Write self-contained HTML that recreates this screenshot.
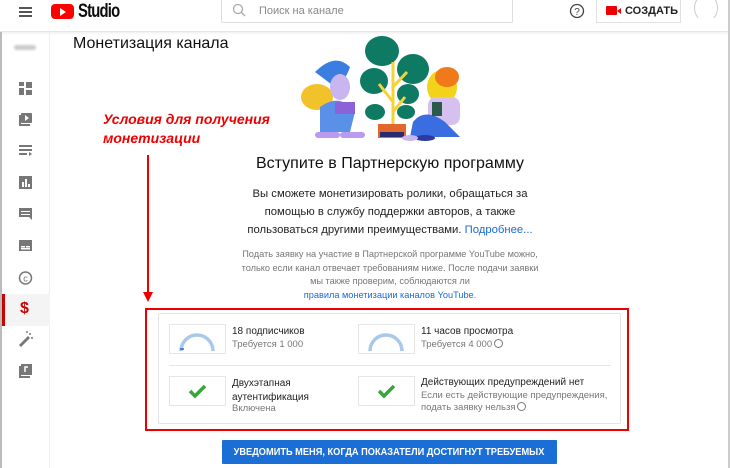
<!DOCTYPE html>
<html><head><meta charset="utf-8"><style>
*{margin:0;padding:0;box-sizing:border-box}
body{width:730px;height:468px;overflow:hidden;background:#fff;font-family:"Liberation Sans",Arial,sans-serif;position:relative;color:#0d0d0d}
.a{position:absolute}
.hdr{left:0;top:0;width:730px;height:32px;background:#fff;border-bottom:1px solid #e6e6e6;box-shadow:0 1px 3px rgba(0,0,0,.08)}
.side{left:0;top:32px;width:50px;height:436px;border-right:1px solid #eee;border-left:2px solid #bbb}
.t{position:absolute;white-space:nowrap}
.box{position:absolute;border:1px solid #e6e6e6;background:#fff}
.i{display:inline-block;width:9px;height:9px;border:1px solid #777;border-radius:50%;vertical-align:-1px;margin-left:2px}
</style></head><body>
<div class="a hdr"></div>
<div class="a" style="left:728px;top:0;width:2px;height:468px;background:#ccc"></div>
<div class="a" style="left:19px;top:7px;width:13px;height:2px;background:#555;box-shadow:0 4px 0 #555,0 8px 0 #555"></div>
<div class="a" style="left:51px;top:4px;width:23px;height:15px;background:#f00;border-radius:4px"></div>
<div class="a" style="left:60px;top:8px;width:0;height:0;border-left:6px solid #fff;border-top:4px solid transparent;border-bottom:4px solid transparent"></div>
<div class="t" style="left:78px;top:1px;font-size:19px;font-weight:bold;letter-spacing:-1px;transform:scaleX(.78);transform-origin:left">Studio</div>
<div class="a" style="left:221px;top:-2px;width:292px;height:25px;border:1px solid #ddd;border-radius:2px"></div>
<svg class="a" style="left:232px;top:3px" width="14" height="14"><circle cx="6" cy="6" r="4.5" fill="none" stroke="#aaa" stroke-width="1.3"/><line x1="9.5" y1="9.5" x2="13" y2="13" stroke="#aaa" stroke-width="1.3"/></svg>
<div class="t" style="left:259px;top:5px;font-size:11px;color:#888">Поиск на канале</div>
<svg class="a" style="left:569px;top:3px" width="16" height="16"><circle cx="8" cy="8" r="6.5" fill="none" stroke="#444" stroke-width="1.3"/><text x="8" y="12" font-size="10" text-anchor="middle" fill="#444" font-family="Liberation Sans">?</text></svg>
<div class="a" style="left:596px;top:-2px;width:85px;height:25px;border:1px solid #e0e0e0"></div>
<div class="a" style="left:606px;top:6px;width:11px;height:9px;background:#e00;border-radius:1px"></div>
<div class="a" style="left:617px;top:8px;width:0;height:0;border-right:4px solid #e00;border-top:3px solid transparent;border-bottom:3px solid transparent"></div>
<div class="t" style="left:625px;top:5px;font-size:11px;font-weight:bold;color:#222">СОЗДАТЬ</div>
<div class="a" style="left:694px;top:-6px;width:24px;height:28px;border:1px solid #ccc;border-radius:50%;border-color:transparent #ccc"></div>
<div class="a side"></div>
<div class="a" style="left:14px;top:45px;width:22px;height:5px;background:#ccc;border-radius:3px;filter:blur(1px)"></div>
<svg class="a" style="left:0;top:75px" width="50" height="320" fill="#777">
<rect x="19" y="7" width="5" height="4"/><rect x="26" y="7" width="6" height="6"/><rect x="19" y="13" width="5" height="7"/><rect x="26" y="15" width="6" height="5"/>
<rect x="21" y="38" width="11" height="10" rx="1"/><rect x="19" y="40" width="2" height="10"/><rect x="19" y="49" width="11" height="2"/><path d="M25 40 l4 3 -4 3z" fill="#fff"/>
<rect x="19" y="70" width="13" height="2"/><rect x="19" y="74" width="13" height="2"/><rect x="19" y="78" width="8" height="2"/><path d="M29 77 l3 2 -3 2z"/>
<rect x="19" y="101" width="13" height="13"/><rect x="22" y="107" width="2" height="5" fill="#fff"/><rect x="25" y="104" width="2" height="8" fill="#fff"/><rect x="28" y="109" width="2" height="3" fill="#fff"/>
<path d="M19 133 h13 v12 l-3 -3 h-10z"/><rect x="21" y="136" width="9" height="1" fill="#fff"/><rect x="21" y="139" width="9" height="1" fill="#fff"/>
<rect x="19" y="165" width="13" height="11"/><rect x="21" y="171" width="4" height="1.5" fill="#fff"/><rect x="26" y="171" width="4" height="1.5" fill="#fff"/><rect x="21" y="173" width="9" height="1.5" fill="#fff"/>
<circle cx="25.5" cy="203" r="6" fill="none" stroke="#777" stroke-width="1.5"/><text x="25.5" y="206.5" font-size="9" text-anchor="middle" font-family="Liberation Sans">c</text>
<path d="M19 270 l9 -9 2 2 -9 9z"/><circle cx="30" cy="259" r="1"/><circle cx="27" cy="257" r="1"/><circle cx="32" cy="263" r="1"/>
<rect x="21" y="289" width="11" height="11"/><rect x="19" y="291" width="2" height="11"/><rect x="19" y="301" width="11" height="2"/><path d="M25 297 v-5 h3" stroke="#fff" fill="none" stroke-width="1.5"/>
</svg>
<div class="a" style="left:2px;top:294px;width:48px;height:32px;background:#f4f4f4"></div>
<div class="a" style="left:2px;top:294px;width:3px;height:32px;background:#c00"></div>
<div class="t" style="left:20px;top:300px;font-size:16px;font-weight:bold;color:#c00">$</div>
<div class="t" style="left:73px;top:35px;font-size:16px;color:#111">Монетизация канала</div>
<svg class="a" style="left:295px;top:32px" width="175" height="112">
<g fill="#0e7a63">
<ellipse cx="87" cy="19" rx="17" ry="15"/><ellipse cx="118" cy="37" rx="16" ry="15"/><ellipse cx="79" cy="49" rx="14" ry="13"/><ellipse cx="113" cy="62" rx="11" ry="10"/><ellipse cx="80" cy="80" rx="10" ry="8"/><ellipse cx="111" cy="80" rx="9" ry="7"/></g>
<path d="M98 95 V30 M98 55 L112 40 M98 70 L84 52 M98 80 L110 65" stroke="#f2d33a" stroke-width="3" fill="none"/>
<rect x="83" y="92" width="28" height="14" fill="#e2672c"/><rect x="85" y="100" width="24" height="5" fill="#2a2a6e"/>
<path d="M20 40 Q40 20 55 35 Q50 50 40 55 Z" fill="#3a7ee0"/>
<ellipse cx="22" cy="65" rx="16" ry="13" fill="#f2c22a"/>
<ellipse cx="45" cy="55" rx="10" ry="13" fill="#c9b6f0"/>
<path d="M25 75 Q45 60 60 80 L55 100 H25 Z" fill="#5a90e8"/>
<rect x="40" y="70" width="20" height="12" fill="#8a63d8"/>
<rect x="20" y="100" width="25" height="6" rx="3" fill="#b99af0"/><rect x="45" y="100" width="25" height="6" rx="3" fill="#b99af0"/>
<ellipse cx="147" cy="55" rx="15" ry="17" fill="#f2d31a"/><ellipse cx="152" cy="45" rx="12" ry="10" fill="#f07a1a"/>
<rect x="133" y="65" width="32" height="28" rx="8" fill="#d6c0f0"/>
<path d="M118 90 Q130 75 150 90 L165 105 H115 Z" fill="#3a6de0"/>
<rect x="137" y="70" width="10" height="14" fill="#2a5a4a"/>
<ellipse cx="130" cy="106" rx="10" ry="3" fill="#2a3aa0"/>
<ellipse cx="115" cy="106" rx="8" ry="3" fill="#c9b6f0"/>
</svg>
<div class="t" style="left:103px;top:110px;font-size:14px;font-weight:bold;font-style:italic;color:#e00;line-height:19px">Условия для получения<br>монетизации</div>
<div class="a" style="left:147px;top:155px;width:2px;height:140px;background:#e00"></div>
<div class="a" style="left:143px;top:292px;width:0;height:0;border-top:10px solid #e00;border-left:5px solid transparent;border-right:5px solid transparent"></div>
<div class="t" style="left:200px;top:155px;width:380px;text-align:center;font-size:16px;color:#111">Вступите в Партнерскую программу</div>
<div class="t" style="left:200px;top:185px;width:380px;text-align:center;font-size:11.3px;line-height:18px;color:#222;white-space:normal">Вы сможете монетизировать ролики, обращаться за<br>помощью в службу поддержки авторов, а также<br>пользоваться другими преимуществами. <span style="color:#1a6ad8">Подробнее...</span></div>
<div class="t" style="left:200px;top:248px;width:380px;text-align:center;font-size:9.2px;line-height:13.5px;color:#777">Подать заявку на участие в Партнерской программе YouTube можно,<br>только если канал отвечает требованиям ниже. После подачи заявки<br>мы также проверим, соблюдаются ли<br><span style="color:#1a6ad8">правила монетизации каналов YouTube</span>.</div>
<div class="a" style="left:145px;top:308px;width:484px;height:123px;border:2px solid #e00"></div>
<div class="a" style="left:158px;top:313px;width:463px;height:111px;border:1px solid #e4e4e4;border-radius:2px"></div>
<div class="box" style="left:169px;top:324px;width:57px;height:30px"></div>
<div class="box" style="left:358px;top:324px;width:57px;height:30px"></div>
<svg class="a" style="left:169px;top:324px" width="57" height="30"><path d="M12 27 A16 16 0 0 1 44 27" stroke="#a8c8ec" stroke-width="3.5" fill="none"/><line x1="11" y1="25" x2="15" y2="25" stroke="#1a6ad8" stroke-width="1.5"/></svg>
<svg class="a" style="left:358px;top:324px" width="57" height="30"><path d="M12 27 A16 16 0 0 1 44 27" stroke="#a8c8ec" stroke-width="3.5" fill="none"/></svg>
<div class="t" style="left:232px;top:326px;font-size:10px;color:#222">18 подписчиков</div>
<div class="t" style="left:232px;top:339px;font-size:9.5px;color:#777">Требуется 1 000</div>
<div class="t" style="left:421px;top:326px;font-size:10px;color:#222">11 часов просмотра</div>
<div class="t" style="left:421px;top:339px;font-size:9.5px;color:#777">Требуется 4 000<span class="i"></span></div>
<div class="a" style="left:169px;top:365px;width:442px;height:1px;background:#e6e6e6"></div>
<div class="box" style="left:169px;top:376px;width:57px;height:30px"></div>
<div class="box" style="left:358px;top:376px;width:57px;height:30px"></div>
<svg class="a" style="left:169px;top:376px" width="57" height="30"><path d="M21 15 l5 5 l10 -10" stroke="#3aa53a" stroke-width="3.5" fill="none"/></svg>
<svg class="a" style="left:358px;top:376px" width="57" height="30"><path d="M21 15 l5 5 l10 -10" stroke="#3aa53a" stroke-width="3.5" fill="none"/></svg>
<div class="t" style="left:232px;top:377px;font-size:10px;line-height:14px;color:#222">Двухэтапная<br>аутентификация</div>
<div class="t" style="left:232px;top:403px;font-size:9.5px;color:#777">Включена</div>
<div class="t" style="left:421px;top:377px;font-size:10px;color:#222">Действующих предупреждений нет</div>
<div class="t" style="left:421px;top:390px;font-size:9.5px;line-height:12px;color:#777">Если есть действующие предупреждения,<br>подать заявку нельзя<span class="i"></span></div>
<div class="a" style="left:222px;top:440px;width:335px;height:24px;background:#1b6ed6;border-radius:1px"></div>
<div class="t" style="left:389px;top:446px;font-size:10.5px;font-weight:bold;color:#fff;transform:translateX(-50%) scaleX(.88)">УВЕДОМИТЬ МЕНЯ, КОГДА ПОКАЗАТЕЛИ ДОСТИГНУТ ТРЕБУЕМЫХ</div>
</body></html>
